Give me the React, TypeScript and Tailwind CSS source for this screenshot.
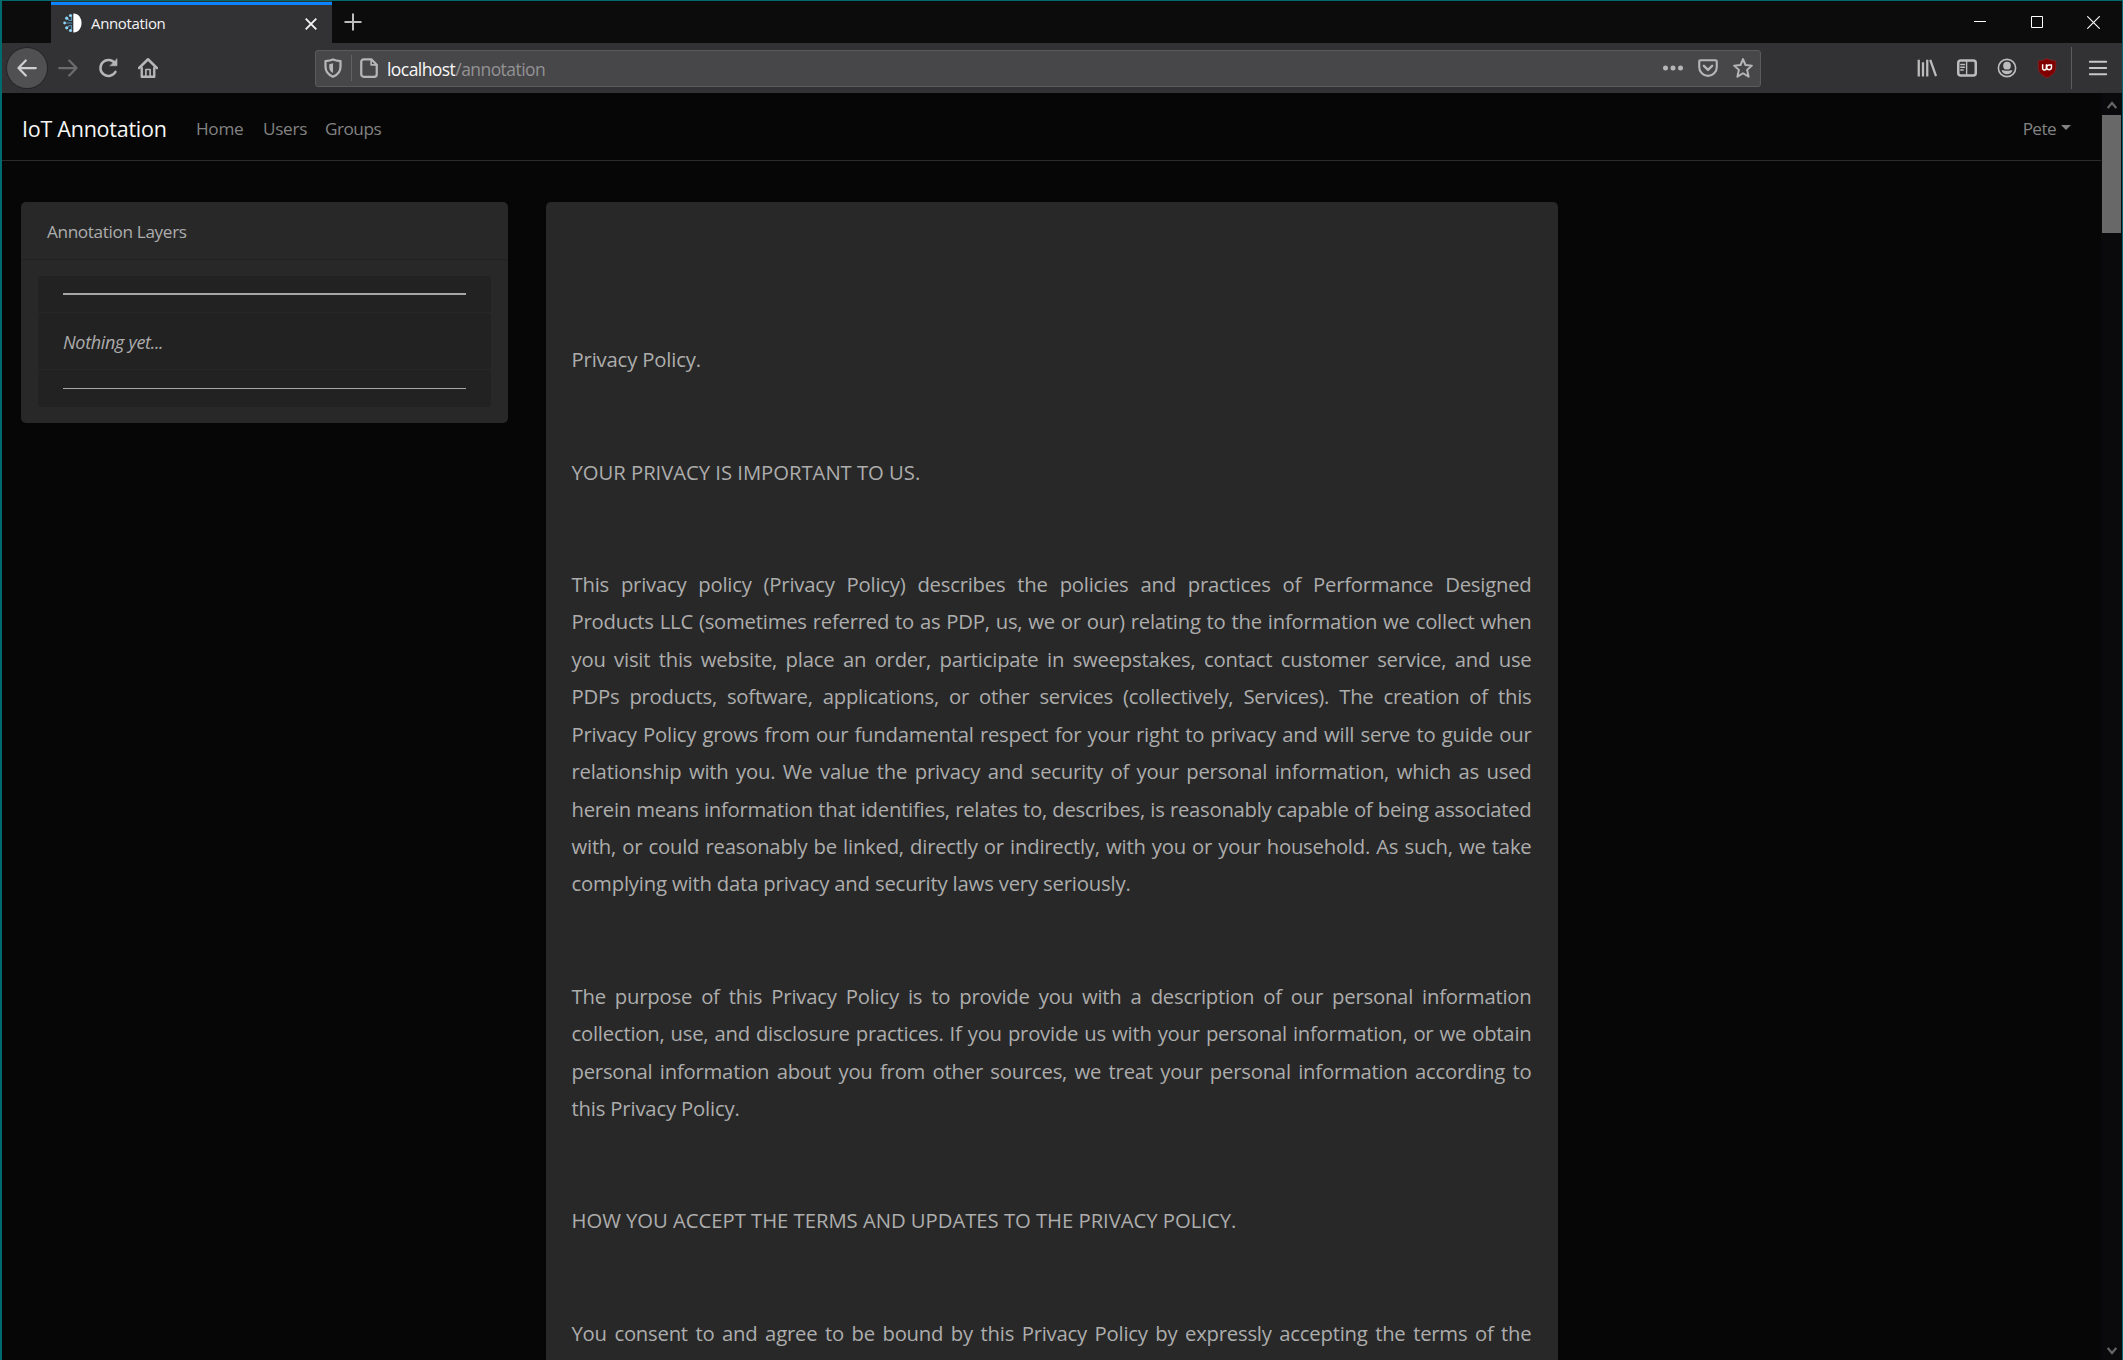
import React from "react";

const POLICY: { text: string; fill?: boolean; spacing?: number }[] = [
  { text: "" },
  { text: "" },
  { text: "" },
  { text: "Privacy Policy." },
  { text: "" },
  { text: "" },
  { text: "YOUR PRIVACY IS IMPORTANT TO US.", spacing: -0.04 },
  { text: "" },
  { text: "" },
  { text: "This privacy policy (Privacy Policy) describes the policies and practices of Performance Designed", fill: true },
  { text: "Products LLC (sometimes referred to as PDP, us, we or our) relating to the information we collect when", fill: true },
  { text: "you visit this website, place an order, participate in sweepstakes, contact customer service, and use", fill: true },
  { text: "PDPs products, software, applications, or other services (collectively, Services). The creation of this", fill: true },
  { text: "Privacy Policy grows from our fundamental respect for your right to privacy and will serve to guide our", fill: true },
  { text: "relationship with you. We value the privacy and security of your personal information, which as used", fill: true },
  { text: "herein means information that identifies, relates to, describes, is reasonably capable of being associated", fill: true, spacing: -0.26 },
  { text: "with, or could reasonably be linked, directly or indirectly, with you or your household. As such, we take", fill: true },
  { text: "complying with data privacy and security laws very seriously." },
  { text: "" },
  { text: "" },
  { text: "The purpose of this Privacy Policy is to provide you with a description of our personal information", fill: true },
  { text: "collection, use, and disclosure practices. If you provide us with your personal information, or we obtain", fill: true },
  { text: "personal information about you from other sources, we treat your personal information according to", fill: true },
  { text: "this Privacy Policy." },
  { text: "" },
  { text: "" },
  { text: "HOW YOU ACCEPT THE TERMS AND UPDATES TO THE PRIVACY POLICY.", spacing: -0.04 },
  { text: "" },
  { text: "" },
  { text: "You consent to and agree to be bound by this Privacy Policy by expressly accepting the terms of the", fill: true },
];

function Icon({ children, className = "" }: { children: React.ReactNode; className?: string }) {
  return (
    <svg
      viewBox="0 0 16 16"
      className={"size-5 shrink-0 " + className}
      fill="none"
      stroke="currentColor"
      strokeWidth="1.8"
      strokeLinecap="round"
      strokeLinejoin="round"
    >
      {children}
    </svg>
  );
}

function Favicon() {
  return (
    <svg viewBox="0 0 20 20" className="size-5 shrink-0" fill="none">
      <path d="M10.3.5C15 .2 18.5 4.500 18.500 10S15 19.800 10.300 19.500Z" fill="#fff" />
      <path d="M8.500 3.500V7M4 5.500 6.500 7.500H9M2 10H9M4 14.500 6.500 12.500H9M8.500 16.500V13" stroke="#4d8fb5" strokeWidth="1.200" />
      <g fill="#8fd3f5">
        <circle cx="7.500" cy="2.500" r="1.600" />
        <circle cx="3.700" cy="5.200" r="1.600" />
        <circle cx="1.600" cy="10" r="1.400" />
        <circle cx="3.700" cy="14.800" r="1.600" />
        <circle cx="7.500" cy="17.500" r="1.600" />
      </g>
    </svg>
  );
}

function TabStrip() {
  return (
    <div className="flex h-[42px] shrink-0 bg-[#0c0c0c]">
      <div className="ml-[49px] flex h-full w-[281px] shrink-0 flex-col bg-[#323234]">
        <div className="mt-px h-[3px] bg-[#0a84ff]" />
        <div className="flex flex-1 items-center pb-[2px] pl-3 pr-[15px]">
          <Favicon />
          <span className="ml-[8px] text-[15px] tracking-[-0.35px] text-[#f4f4f4]">Annotation</span>
          <svg viewBox="0 0 12 12" className="ml-auto mt-px size-3 text-[#f5f5f5]" stroke="currentColor" strokeWidth="1.800">
            <path d="M.7.7 11.300 11.300M11.300.7.7 11.300" />
          </svg>
        </div>
      </div>
      <svg viewBox="0 0 18 18" className="ml-3 mt-3 size-[18px] text-[#bdbdbd]" stroke="currentColor" strokeWidth="2">
        <path d="M9 0.500V17.500M.5 9H17.500" />
      </svg>
      <div className="ml-auto mr-[22px] flex items-center gap-[44px] text-white">
        <svg viewBox="0 0 12 12" className="mr-px size-3" stroke="currentColor">
          <path d="M0 5.500H12" />
        </svg>
        <svg viewBox="0 0 12 12" className="size-3" fill="none" stroke="currentColor">
          <path d="M.5.5h11v11H.5z" />
        </svg>
        <svg viewBox="0 0 13 13" className="size-[13px]" stroke="currentColor" strokeWidth="1.100">
          <path d="M.3.300 12.700 12.700M12.700.3.3 12.700" />
        </svg>
      </div>
    </div>
  );
}

function Toolbar() {
  return (
    <div className="flex h-[50px] shrink-0 items-center bg-[#323234] text-[#b6b6b7]">
      <div className="ml-[5px] flex size-10 items-center justify-center rounded-full bg-[#505052] text-[#cfcfcf] ring-1 ring-[#252527]">
        <Icon>
          <path d="M15 8H1.500M7 2 1.200 8 7 14" />
        </Icon>
      </div>
      <Icon className="ml-[11px] text-[#6b6b6d]">
        <path d="M1 8H14.500M9 2 14.800 8 9 14" />
      </Icon>
      <Icon className="ml-5">
        <path d="M13.700 4.500A6.400 6.400 0 1 0 14 11" strokeWidth="2" />
        <path d="M15.200.8V6.200H9.700Z" fill="currentColor" strokeWidth=".5" />
      </Icon>
      <Icon className="ml-5">
        <path d="M.9 8 8 1 15.100 8" strokeWidth="2" />
        <path d="M3 8V15H13V8" strokeWidth="1.900" />
        <path d="M6.300 15V9.200H9.700V15" strokeWidth="1.300" />
      </Icon>
      <div className="ml-[157px] flex h-[37px] w-[1446px] shrink-0 items-center rounded-[3px] border border-[#5b5b5d] bg-[#474749]">
        <Icon className="ml-[7px]">
          <path d="M8 1.200C6 2 3.800 2.300 2 2.500V7C2 11 4.500 13.500 8 15 11.500 13.500 14 11 14 7V2.500C12.200 2.300 10 2 8 1.200Z" />
          <path d="M8 4.200 5 4.900V7.500C5 9.500 6.200 10.900 8 12Z" fill="currentColor" stroke="none" />
        </Icon>
        <div className="ml-2 h-[26px] w-px bg-[#626264]" />
        <Icon className="ml-[7px]">
          <path d="M3.500 1H9.800L14.200 5.400V13A2 2 0 0 1 12.200 15H3.800A2 2 0 0 1 1.800 13V3A2 2 0 0 1 3.800 1" />
          <path d="M9.700 1.300V5.500H14" strokeWidth="1.300" />
        </Icon>
        <span className="ml-[8px] pt-[3px] text-[17.500px] leading-none tracking-[-0.560px] text-[#929294]">
          <span className="text-[#f7f7f7]">localhost</span>/annotation
        </span>
        <div className="ml-auto mr-[7px] flex items-center gap-[15px]">
          <Icon>
            <g fill="currentColor" stroke="none">
              <circle cx="2" cy="8" r="2" />
              <circle cx="8" cy="8" r="2" />
              <circle cx="14" cy="8" r="2" />
            </g>
          </Icon>
          <Icon>
            <path d="M2 1.800H14A1 1 0 0 1 15 2.800V7.300A7 7 0 0 1 1 7.300V2.800A1 1 0 0 1 2 1.800Z" strokeWidth="1.700" />
            <path d="M4.700 6.300 8 9.500 11.300 6.300" strokeWidth="1.900" />
          </Icon>
          <Icon>
            <path d="M8 .9 10 5.600 15.100 6.100 11.300 9.500 12.500 14.900 8 12.200 3.500 14.900 4.700 9.500.9 6.100 6 5.600Z" strokeWidth="1.600" />
          </Icon>
        </div>
      </div>
      <div className="ml-auto flex items-center gap-5 text-[#bcbcbd]">
        <Icon>
          <path d="M1.400 1.300V14.700M4.800 3.300V14.700M8.200 1.300V14.700" strokeLinecap="butt" />
          <path d="M10.600 1.500 15.200 14.500" strokeLinecap="butt" />
        </Icon>
        <Icon>
          <rect x="1" y="2" width="14" height="12" rx="2" strokeWidth="2" />
          <path d="M7.700 2V14M3 5.200H6M3 7.400H6M3 9.600H5" strokeWidth="1.100" />
        </Icon>
        <Icon>
          <circle cx="8" cy="8" r="6.900" strokeWidth="1.300" />
          <circle cx="8" cy="6.100" r="3.100" fill="currentColor" stroke="none" />
          <path d="M3.600 9.800C5 9.600 5.500 10.200 8 10.200S11 9.600 12.400 9.800C11.800 12 10.200 12.900 8 12.900S4.200 12 3.600 9.800Z" fill="currentColor" stroke="none" />
        </Icon>
        <Icon>
          <path d="M8 .3C6 1.700 3.500 2.200 1 2.200V7.500C1 11.500 4 14 8 15.800 12 14 15 11.500 15 7.500V2.200C12.500 2.200 10 1.700 8 .3Z" fill="#800000" stroke="#8d2a2a" strokeWidth=".5" />
          <path d="M4.500 5V7.800A1.500 1.500 0 0 0 7.500 8.400V5" stroke="#fff" strokeWidth="1.150" strokeLinecap="butt" />
          <path d="M7.700 7.400A1.900 1.900 0 0 1 9.600 5.600H11.600V7.400A1.900 1.900 0 0 1 7.700 7.400Z" stroke="#fff" strokeWidth="1.150" strokeLinecap="butt" />
        </Icon>
      </div>
      <div className="ml-[14px] h-[42px] w-px bg-[#5c5c5e]" />
      <Icon className="ml-4 mr-[14px] text-[#c6c6c6]">
        <path d="M1.500 3H14.500M1.500 8H14.500M1.500 13H14.500" strokeWidth="1.700" />
      </Icon>
    </div>
  );
}

function Navbar() {
  return (
    <nav className="flex h-[68px] shrink-0 items-center border-b border-[#2c2c2c] pt-1 text-[17.200px] text-[#828282]">
      <span className="ml-[20px] w-[143px] whitespace-nowrap pt-px text-[21.500px] tracking-[-0.250px] text-[#f6f6f6]">IoT Annotation</span>
      <span className="ml-[31px] w-[67px] tracking-[-0.3px]">Home</span>
      <span className="w-[62px] tracking-[-0.3px]">Users</span>
      <span className="tracking-[-0.5px]">Groups</span>
      <span className="ml-auto tracking-[-0.6px]">Pete</span>
      <svg viewBox="0 0 10 5" className="mb-[3px] ml-[5px] mr-[30px] h-[5px] w-[10px]" fill="currentColor">
        <path d="M0 0H10L5 5Z" />
      </svg>
    </nav>
  );
}

function LayersCard() {
  return (
    <section className="h-[221px] w-[487px] shrink-0 rounded-[5px] bg-[#282828] text-[17.200px] tracking-[-0.36px] text-[#adadad]">
      <header className="flex h-[58px] items-center border-b border-[#222] pl-[26px] pt-[2px]">Annotation Layers</header>
      <div className="mx-[17px] mt-4 rounded-[4px] bg-[#222]">
        <div className="h-[37px] border-b border-[#272727] px-[25px] pt-[17px]">
          <hr className="border-t-2 border-[#a6a6a6]" />
        </div>
        <div className="flex h-[57px] items-center border-b border-[#272727] px-[25px] pt-[3px] text-[18px] italic tracking-[-0.320px]">Nothing yet...</div>
        <div className="h-[37px] px-[25px] pt-[18px]">
          <hr className="border-t border-[#a6a6a6]" />
        </div>
      </div>
    </section>
  );
}

function Document() {
  return (
    <article className="ml-[38px] w-[1012px] shrink-0 self-stretch rounded-t-[5px] bg-[#282828] pl-[25.500px] pr-[26.500px] pt-[27px] text-[20.300px] leading-[37.440px] tracking-[-0.18px] text-[#adadad]">
      {POLICY.map((line, i) => (
        <p
          key={i}
          className={line.fill ? "h-[37.440px] whitespace-nowrap text-justify tracking-[-0.23px] [text-align-last:justify]" : "h-[37.440px] whitespace-nowrap"}
          style={line.spacing === undefined ? undefined : { letterSpacing: line.spacing }}
        >
          {line.text}
        </p>
      ))}
    </article>
  );
}

function Scrollbar() {
  return (
    <div className="flex w-[21px] shrink-0 flex-col items-center bg-[#0a0a0c] text-[#676767]">
      <svg viewBox="0 0 10 8" className="mb-[6px] mt-[8px] h-2 w-[10px]" fill="none" stroke="currentColor" strokeWidth="2.200">
        <path d="M.7 7 5 2 9.300 7" />
      </svg>
      <div className="h-[118px] w-[19px] bg-[#686868]" />
      <svg viewBox="0 0 10 8" className="mb-[5px] mt-auto h-2 w-[10px]" fill="none" stroke="currentColor" strokeWidth="2.200">
        <path d="M.7 1 5 6 9.300 1" />
      </svg>
    </div>
  );
}

export default function App() {
  return (
    <div className="flex h-[1360px] w-[2123px] flex-col overflow-hidden border-l-2 border-r border-t border-[#006a6e] bg-[#060606] font-['Open_Sans','Noto_Sans',sans-serif]">
      <TabStrip />
      <Toolbar />
      <div className="flex min-h-0 flex-1">
        <div className="flex min-w-0 flex-1 flex-col overflow-hidden">
          <Navbar />
          <main className="flex min-h-0 flex-1 items-start pl-[19px] pt-[41px]">
            <LayersCard />
            <Document />
          </main>
        </div>
        <Scrollbar />
      </div>
    </div>
  );
}
